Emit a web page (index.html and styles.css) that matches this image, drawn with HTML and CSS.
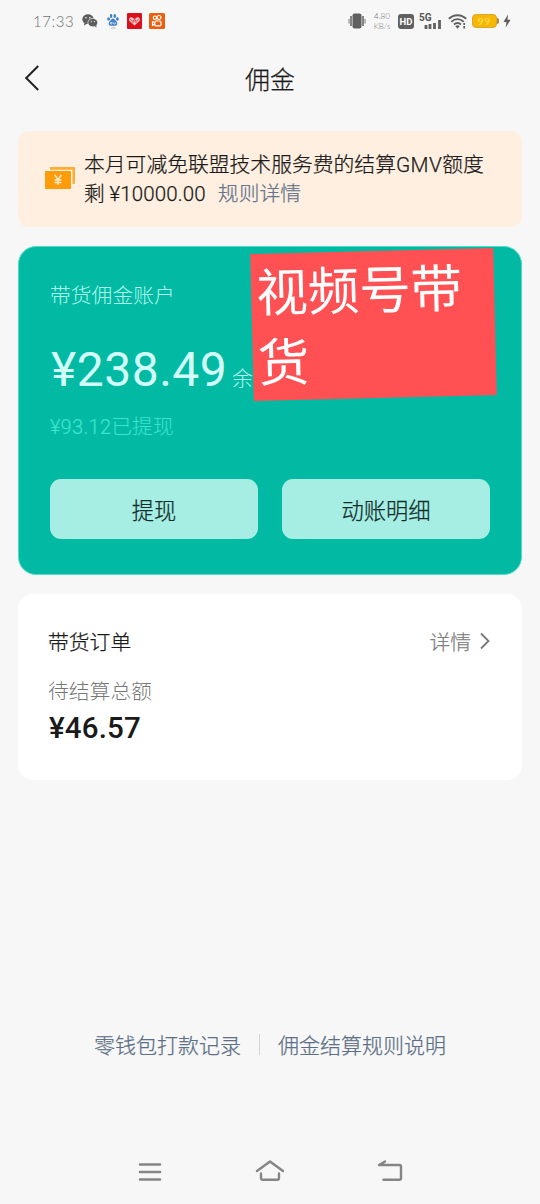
FILE: index.html
```html
<!DOCTYPE html>
<html lang="zh-CN">
<head>
<meta charset="utf-8">
<title>佣金</title>
<link rel="stylesheet" href="styles.css">
</head>
<body>
<div class="screen">
  <div class="status">
    <span class="time">17:33</span>
    <svg class="s-wechat" width="16" height="14" viewBox="0 0 16 14"><ellipse cx="6" cy="5.2" rx="5.7" ry="4.9" fill="#5d5d5d"/><path d="M2.5 8.5L2 11.5l3-1.8z" fill="#5d5d5d"/><ellipse cx="10.8" cy="8.6" rx="4.9" ry="4.2" fill="#5d5d5d" stroke="#f7f7f7" stroke-width=".7"/><path d="M12.5 12l2 1.4-.3-2.6z" fill="#5d5d5d"/><g fill="#f7f7f7"><circle cx="4" cy="3.8" r=".8"/><circle cx="7.8" cy="3.8" r=".8"/><circle cx="9.3" cy="7.6" r=".6"/><circle cx="12.4" cy="7.6" r=".6"/></g></svg>
    <svg class="s-baidu" width="12" height="16" viewBox="0 0 12 16"><g fill="#3d7fc4"><ellipse cx="1.6" cy="6" rx="1.4" ry="1.8"/><ellipse cx="4.1" cy="3" rx="1.3" ry="1.9"/><ellipse cx="7.8" cy="3" rx="1.3" ry="1.9"/><ellipse cx="10.4" cy="6" rx="1.4" ry="1.8"/><path d="M6 5.6c1.5 0 2 1.5 3.2 2.6 1.6 1.5 1.4 4.5-.8 4.5H3.6c-2.2 0-2.4-3-.8-4.5C4 7.100 4.500 5.600 6 5.600z"/></g><path d="M5 8.500v2.500H3.500V9.600H5M6.700 9.300V11h1.700V9.300" fill="none" stroke="#e8f1fa" stroke-width=".7"/><path d="M4 15h4.500" stroke="#b9b9b9"/></svg>
    <svg class="s-heart" width="15" height="16" viewBox="0 0 15 16"><rect width="15" height="16" rx="1" fill="#dc101c"/><path d="M7.500 12.500L2.500 8C.9 5.600 4 3 6 5l1.500 1.200L9 5c2-2 5.100.6 3.500 3z" fill="#f8cbcb"/><path d="M3.300 6.300l2.300 1.800 1.900-1.600 2 1.600 2.200-2M5.300 10l2.200-2 2.200 2" fill="none" stroke="#dc101c" stroke-width=".8"/></svg>
    <svg class="s-kuai" width="16" height="16" viewBox="0 0 16 16"><rect width="16" height="16" rx="1.500" fill="#ea6010"/><g fill="none" stroke="#fff" stroke-width="1.200"><circle cx="6" cy="4.700" r="1.700"/><circle cx="10" cy="4.500" r="2"/><rect x="5.800" y="8" width="6.200" height="4.800" rx="1.300"/><path d="M5.500 9.500L3.500 8.600v3.700l2-.9"/></g></svg>
    <span class="spacer"></span>
    <svg class="s-vib" width="18" height="16" viewBox="0 0 18 16"><rect x="4.500" y=".5" width="9" height="15" rx="2" fill="#606060"/><path d="M3 3v10M15 3v10" stroke="#606060" stroke-width="1.500"/><path d="M1 6v4.500M17 6v4.500" stroke="#777"/></svg>
    <span class="speed"><span>4.80</span><span>KB/s</span></span>
    <span class="hd">HD</span>
    <span class="signal"><span class="gen">5G</span><svg width="18" height="9" viewBox="0 0 18 9"><path d="M2 5v4M6 4v5M10.500 3v6M15.500 0v9" stroke="#606060" stroke-width="2.800"/></svg></span>
    <svg class="s-wifi" width="19" height="15" viewBox="0 0 19 15"><g fill="none" stroke="#606060" stroke-width="1.900"><path d="M.8 4.800c5-4.800 12.400-4.800 17.400 0"/><path d="M3.300 7.800c3.500-3.600 8.900-3.600 12.400 0"/><path d="M6 10.500c2-2 5-2 7 0"/></g><path d="M7.200 12l2.300 2.700 2.300-2.700c-1.300-1.100-3.300-1.100-4.600 0z" fill="#606060"/><path d="M16.200 9v2M16.200 12v2.500" stroke="#606060" stroke-width="1.700"/></svg>
    <span class="battery">99</span><i class="nub"></i>
    <svg class="s-bolt" width="8" height="14" viewBox="0 0 8 14"><path d="M5 .5L.5 8h3L2.700 13.500 7.600 5.800H4.500z" fill="#5c5c5c"/></svg>
  </div>

  <div class="header">
    <svg class="back" width="16" height="28" viewBox="0 0 16 28"><path d="M14.200 2L2.200 14l12 12" fill="none" stroke="#222" stroke-width="2"/></svg>
    <span class="title">佣金</span>
  </div>

  <div class="notice">
    <svg class="money" width="31" height="24" viewBox="0 0 31 24"><path d="M5 1h24a1 1 0 0 1 1 1v15a1 1 0 0 1-1 1h-1.500V3.800H5z" fill="#ffac33"/><rect y="5" width="26" height="18" rx="1" fill="#ff9c0a"/><path d="M9.700 9l3.300 4.500L16.300 9M13 13.500V19M9.700 14h6.600M9.700 16.500h6.600" fill="none" stroke="#fff0da" stroke-width="1.300"/></svg>
    <div class="notice-text">
      <div class="notice-main">本月可减免联盟技术服务费的结算<span class="gmv">GMV</span>额度</div>
      <div class="notice-sub">剩 <span class="quota">¥10000.00</span><span class="rules">规则详情</span></div>
    </div>
  </div>

  <div class="account">
    <div class="account-name">带货佣金账户</div>
    <div class="balance"><span class="amount">¥238.49</span><span class="unit">余额</span></div>
    <div class="withdrawn"><span class="num">¥93.12</span>已提现</div>
    <div class="actions">
      <div class="button">提现</div>
      <div class="button">动账明细</div>
    </div>
    <div class="sticker">视频号带货</div>
  </div>

  <div class="orders">
    <div class="orders-head"><span>带货订单</span><span class="detail">详情<svg width="12" height="18" viewBox="0 0 12 18"><path d="M2 1.500L9.500 9 2 16.500" fill="none" stroke="#777" stroke-width="1.800"/></svg></span></div>
    <div class="pending">待结算总额</div>
    <div class="total">¥46.57</div>
  </div>

  <div class="links"><span>零钱包打款记录</span><i class="divider"></i><span>佣金结算规则说明</span></div>

  <div class="nav">
    <svg width="30" height="26" viewBox="0 0 30 26"><path d="M5 5.500h20M5 13h20M5 20.500h20" stroke="#858585" stroke-width="2.600" stroke-linecap="round"/></svg>
    <svg width="30" height="26" viewBox="0 0 30 26"><g fill="none" stroke="#858585" stroke-width="2.400" stroke-linecap="round" stroke-linejoin="round"><path d="M2 12L15 2.500 28 12"/><path d="M6 14.500V19q0 1.800 1.800 1.800h14.400q1.800 0 1.800-1.800v-4.500"/></g></svg>
    <svg width="30" height="26" viewBox="0 0 30 26"><path d="M10 2.500L4 6h20.500q1.500 0 1.500 1.500v11.700q0 1.500-1.500 1.500H8.500" fill="none" stroke="#858585" stroke-width="2.400" stroke-linecap="round" stroke-linejoin="round"/></svg>
  </div>
</div>
</body>
</html>
```
FILE: styles.css
```css
* { box-sizing: border-box; }
body { margin: 0; background: #f7f7f7; }
svg { display: block; flex: none; }
.screen {
  width: 540px;
  height: 1204px;
  overflow: hidden;
  display: flex;
  flex-direction: column;
  background: #f7f7f7;
  color: #1a1a1a;
  font-family: "Noto Sans CJK SC", sans-serif;
  font-weight: 300;
  font-size: 20.8px;
  line-height: 30px;
  white-space: nowrap;
}
.title, .notice-text, .button, .orders-head, .links { -webkit-text-stroke: .25px currentColor; }

.status { height: 42px; padding: 0 29px 0 33px; display: flex; align-items: center; }
.time { width: 49px; font: 300 15px/20px Lato, sans-serif; letter-spacing: .6px; color: #707070; }
.s-baidu { margin-left: 9px; }
.s-heart { margin-left: 8px; }
.s-kuai { margin-left: 7px; }
.spacer { flex: 1; }
.speed { width: 18px; margin-left: 7px; display: flex; flex-direction: column; font: 300 8px/10px Lato, sans-serif; color: #777; text-align: center; }
.hd { width: 16px; height: 15px; margin-left: 7px; border-radius: 3px; background: #606060; color: #fff; font: 700 9.500px/15px Roboto, sans-serif; text-align: center; }
.signal { width: 23px; height: 16px; margin-left: 5px; display: grid; }
.signal > * { grid-area: 1 / 1; }
.gen { font: 700 10px/9px Roboto, sans-serif; color: #555; }
.signal svg { margin: 7px 0 0 5px; }
.s-wifi { margin-left: 6px; }
.battery { width: 25px; height: 14px; margin-left: 5px; border-radius: 4px; background: #f8b705; border: 1px solid #d8a62a; color: #ffe45c; font: 400 10px/12px Lato, sans-serif; letter-spacing: 1px; text-align: center; }
.nub { width: 2px; height: 6px; border-radius: 0 2px 2px 0; background: #a68b48; }
.s-bolt { margin-left: 4px; }

.header { height: 89px; padding: 0 24px; display: grid; align-items: start; }
.header > * { grid-area: 1 / 1; }
.back { margin-top: 22px; }
.title { justify-self: center; margin-top: 17px; font-size: 25px; line-height: 38px; }

.notice { height: 96px; margin: 0 18px; padding: 18px 26px 0 27px; border-radius: 11px; background: #ffefe0; display: flex; gap: 8px; }
.money { margin-top: 17px; }
.notice-main { height: 29px; line-height: 28px; }
.gmv { font-family: Roboto, sans-serif; letter-spacing: .4px; }
.notice-sub { height: 28px; line-height: 28px; }
.quota { font-family: Roboto, sans-serif; font-size: 20.500px; letter-spacing: .15px; }
.rules { margin-left: 12px; color: #66758d; }

.account { position: relative; height: 329px; margin: 19px 18px 0; padding: 32px 31px 0; border: 1px solid #51ddc8; border-radius: 18px; background: #02baa4; color: #aef8eb; }
.balance { height: 64px; margin-top: 29px; padding-left: 1px; display: flex; align-items: baseline; }
.amount { width: 181px; font: 400 48px/64px Roboto, sans-serif; letter-spacing: .5px; color: #d2fff8; }
.withdrawn { height: 30px; margin-top: 8px; color: #3fe3cf; }
.withdrawn .num { font-family: Roboto, sans-serif; font-size: 20px; letter-spacing: .3px; -webkit-text-stroke: .2px currentColor; }
.actions { margin-top: 38.500px; display: grid; grid-template-columns: 1fr 1fr; gap: 24px; }
.button { height: 60px; border-radius: 11px; background: #a6eee4; color: #102d29; font-size: 22.300px; line-height: 61px; text-align: center; }
.sticker { position: absolute; left: 233px; top: 4px; width: 243px; height: 147px; padding: 1px 5px; background: #ff5153; color: #fff; font-size: 51.500px; font-weight: 400; line-height: 70px; white-space: normal; transform: rotate(-1.400deg); }

.orders { height: 186px; margin: 19px 18px 0; padding: 32px 31px 0 30px; border-radius: 15px; background: #fff; }
.orders-head { display: flex; justify-content: space-between; }
.detail { display: flex; align-items: center; gap: 8px; color: #808080; }
.pending { margin-top: 19px; color: #777; }
.total { margin: 4px 0 0 1px; font: 500 29.500px/38px Roboto, sans-serif; letter-spacing: .15px; }

.links { margin-top: 248px; display: flex; justify-content: center; align-items: center; color: #5c6f86; font-size: 21px; line-height: 32px; }
.divider { width: 1px; height: 21px; margin: 0 18px; background: #d5d5d8; }
.nav { margin-top: 99px; display: flex; justify-content: center; gap: 90px; }
```
